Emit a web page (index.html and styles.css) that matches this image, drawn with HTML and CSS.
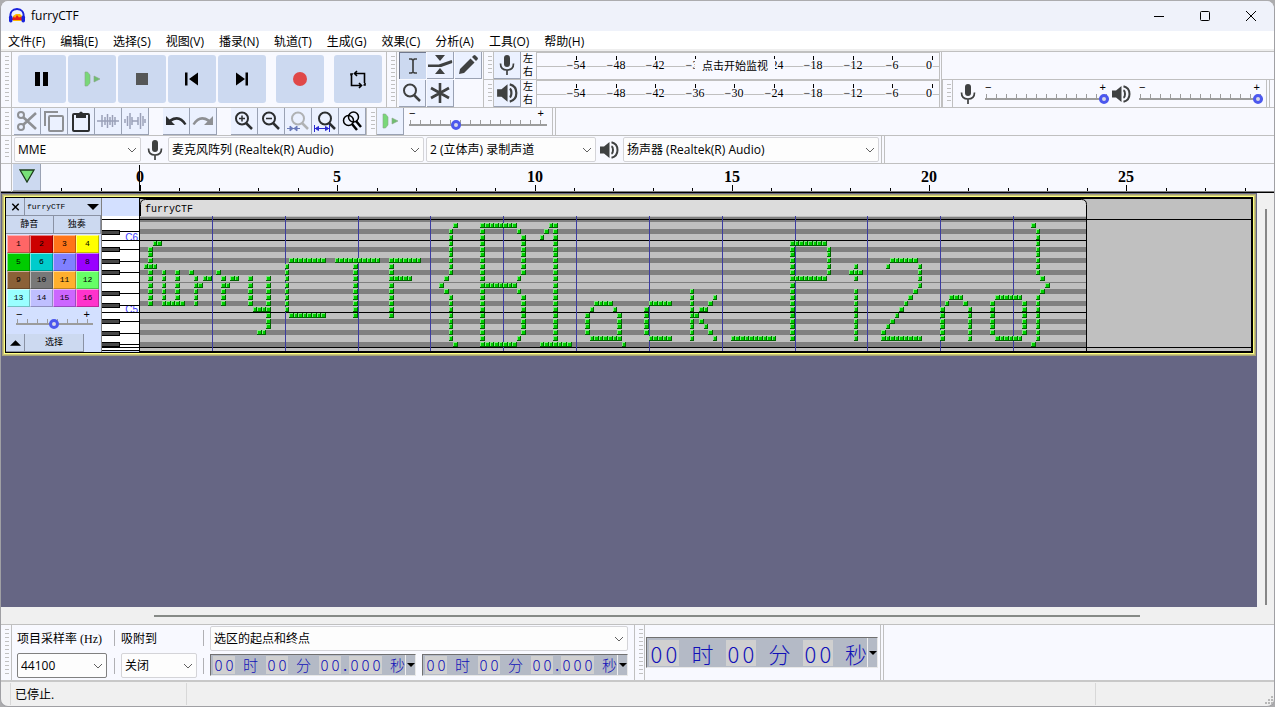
FILE: index.html
```html
<!DOCTYPE html>
<html lang="zh-CN">
<head>
<meta charset="utf-8">
<title>furryCTF</title>
<link rel="stylesheet" href="styles.css">
</head>
<body>
<svg class="defs" aria-hidden="true">
  <symbol id="mic" viewBox="0 0 16 22"><rect x="5" y="1" width="6" height="12" rx="3" fill="#3f4141"/><path d="M1.5 9.500c0 4.500 3 6.500 6.500 6.500s6.500-2 6.500-6.500M8 16v5" fill="none" stroke="#3f4141" stroke-width="1.700"/></symbol>
  <symbol id="speaker" viewBox="0 0 20 20"><path d="M1 6.500h4L10.500 2v16L5 13.500H1z" fill="#3f4141"/><path d="M12.500 6.200c2 1 2 6.600 0 7.600M12.500 2.200c8 2 8 13.600 0 15.600" fill="none" stroke="#3f4141" stroke-width="2"/></symbol>
  <symbol id="lens" viewBox="0 0 22 22"><circle cx="9" cy="8.500" r="6" fill="none" stroke="currentColor" stroke-width="2"/><path d="M13 13l6 6" stroke="currentColor" stroke-width="2.500"/></symbol>
  <symbol id="playspeed" viewBox="0 0 16 16"><path d="M1 1h2.500L6 4v8l-2.500 3H1z" fill="#78d878" stroke="#8aa68a" stroke-width=".6"/><path d="M10 5l6 3-6 3z" fill="#6fbf6f" stroke="#8aa68a" stroke-width=".6"/></symbol>
</svg>
<div class="window">
  <header class="titlebar">
    <svg class="logo" viewBox="0 0 18 18"><path d="M5 14V9l3-2h4l2 2v5z" fill="#ffb900"/><path d="M4 11.500l2-2 1 1.500 2-3 2 2.500 2-1 1 2v1.500H4z" fill="#e8201a"/><path d="M2.500 11C1.500 5 4.500 2 9 2s7.500 3 6.500 9" fill="none" stroke="#1a22dc" stroke-width="1.800"/><rect x="1" y="8.500" width="3.500" height="7" rx="1.700" fill="#1a22dc"/><rect x="13.500" y="8.500" width="3.500" height="7" rx="1.700" fill="#1a22dc"/></svg>
    <h1 class="title">furryCTF</h1>
    <div class="window-buttons">
      <button aria-label="最小化"><svg viewBox="0 0 12 12"><path d="M1 6.500h10"/></svg></button>
      <button aria-label="最大化"><svg viewBox="0 0 12 12"><rect x="1.500" y="1.500" width="9" height="9" rx="1"/></svg></button>
      <button aria-label="关闭"><svg viewBox="0 0 12 12"><path d="M1 1l10 10M11 1L1 11"/></svg></button>
    </div>
  </header>
  <nav class="menu">
    <button>文件(F)</button><button>编辑(E)</button><button>选择(S)</button><button>视图(V)</button><button>播录(N)</button><button>轨道(T)</button><button>生成(G)</button><button>效果(C)</button><button>分析(A)</button><button>工具(O)</button><button>帮助(H)</button>
  </nav>

  <div class="bar bar-main">
    <i class="grab"></i>
    <div class="transport">
      <button aria-label="暂停"><svg viewBox="0 0 24 24"><path d="M5 5h5v14H5zM13 5h5v14h-5z"/></svg></button>
      <button aria-label="播放"><svg viewBox="-4 -4 24 24"><use href="#playspeed" width="16" height="16"/></svg></button>
      <button aria-label="停止"><svg viewBox="0 0 24 24"><path fill="#555757" d="M6 6h12v12H6z"/></svg></button>
      <button aria-label="跳至开始"><svg viewBox="0 0 24 24"><path d="M5 5.500h2.500v13H5zM18 5.500v13L9 12z"/></svg></button>
      <button aria-label="跳至结尾"><svg viewBox="0 0 24 24"><path d="M15.500 5.500H18v13h-2.500zM6 5.500v13L15 12z"/></svg></button>
      <button class="apart" aria-label="录制"><svg viewBox="0 0 24 24"><circle cx="12" cy="12" r="7" fill="#e04848"/></svg></button>
      <button class="apart" aria-label="循环"><svg viewBox="0 0 24 24" fill="none" stroke="#000" stroke-width="1.600"><path d="M9 6.500h9.500V16M15 18.500H5.500V8M11 4L8.500 6.500 11 9M13 16l2.500 2.500L13 21M5 8.500V7h2M19 16v2h-1.500"/></svg></button>
    </div>
    <i class="grab grab-left"></i>
    <div class="tools">
      <button class="tool pressed" aria-label="选择工具"><svg viewBox="0 0 22 22"><path d="M7 4h2.500L11 5l1.500-1H15M11 5v12M7 18h2.500L11 17l1.500 1H15" fill="none" stroke="#3f4141" stroke-width="1.700"/></svg></button>
      <button class="tool" aria-label="包络工具"><svg class="wide" viewBox="0 0 26 22"><path d="M8 1h10l-5 6zM13 14l5 6H8z" fill="#3f4141"/><path d="M1 11.500h11L25 7M1 12h13l11-4" fill="none" stroke="#3f4141" stroke-width="2"/></svg></button>
      <button class="tool" aria-label="绘制工具"><svg viewBox="0 0 22 22"><path d="M2 20l1-5L13.500 4.500l4 4L7 19zM15 3l1.500-1.500q1-1 2 0l2 2q1 1 0 2L19 7z" fill="#3f4141"/></svg></button>
      <button class="tool" aria-label="缩放工具"><svg viewBox="0 0 22 22" color="#3f4141"><use href="#lens"/></svg></button>
      <button class="tool" aria-label="多功能工具"><svg viewBox="0 0 22 22"><path d="M11 1v20M2 6l18 10M20 6L2 16" stroke="#3f4141" stroke-width="2.600"/></svg></button>
    </div>
    <div class="meters">
      <div class="meter-row">
        <i class="grab grab-left"></i>
        <button class="tool" aria-label="录制电平"><svg viewBox="0 0 16 22"><use href="#mic"/></svg></button>
        <div class="channels"><span>左</span><span>右</span></div>
        <div class="meter"><svg class="meter-scale" data-covered="30"></svg><span class="monitor">点击开始监视</span></div>
      </div>
      <div class="meter-row">
        <i class="grab grab-left"></i>
        <button class="tool" aria-label="播放电平"><svg viewBox="0 0 20 20"><use href="#speaker"/></svg></button>
        <div class="channels"><span>左</span><span>右</span></div>
        <div class="meter"><svg class="meter-scale"></svg></div>
      </div>
    </div>
    <div class="mixer-column">
      <div class="mixer-blank"></div>
      <div class="mixer">
        <i class="grab grab-left"></i>
        <svg class="mixer-mic" viewBox="0 0 16 22"><use href="#mic"/></svg>
        <div class="slider"><div class="signs"><span>−</span><span>+</span></div><input type="range" aria-label="录制音量" value="100"></div>
        <svg class="mixer-speaker" viewBox="0 0 20 20"><use href="#speaker"/></svg>
        <div class="slider"><div class="signs"><span>−</span><span>+</span></div><input type="range" aria-label="播放音量" value="100"></div>
        <i class="end"></i>
      </div>
    </div>
  </div>

  <div class="bar bar-edit">
    <i class="grab"></i>
    <div class="tool-group">
      <button class="tool" aria-label="剪切"><svg viewBox="0 0 22 22" fill="none" stroke="#8e9094" stroke-width="2"><circle cx="5" cy="5" r="3"/><circle cx="5" cy="17" r="3"/><path d="M7 7l13 12M7 15L20 3" stroke-width="2.600"/></svg></button>
      <button class="tool" aria-label="复制"><svg viewBox="0 0 22 22" fill="none" stroke="#8e9094" stroke-width="2"><path d="M2 16V2h13"/><rect x="6" y="6" width="14" height="15" rx="1"/></svg></button>
      <button class="tool" aria-label="粘贴"><svg viewBox="0 0 22 22"><rect x="3" y="4" width="16" height="17" rx="1" fill="none" stroke="#2c2e30" stroke-width="2"/><path d="M6 3h3q2-3 4 0h3v5H6z" fill="#2c2e30"/></svg></button>
      <button class="tool" aria-label="修剪"><svg viewBox="0 0 22 22" stroke="#9aa0b8" stroke-width="1.500"><path d="M0 11h22M5 5v12M8 7v8M10.500 4v14M13 7v8M15.500 5v12M18 7v8"/></svg></button>
      <button class="tool" aria-label="静音"><svg viewBox="0 0 22 22" stroke="#9aa0b8" stroke-width="1.500"><path d="M1 9v4M3.500 6v10M6 3v16M8 7v8M8 11h6M14 7v8M16.500 3v16M19 6v10M21 9v4"/></svg></button>
    </div>
    <div class="tool-group">
      <button class="tool" aria-label="撤销"><svg viewBox="0 0 22 22"><path d="M1 6v9h9L6.500 11.500q7-5 13 3.500l2-1Q15 3 4.500 9.500z" fill="#2c2e30"/></svg></button>
      <button class="tool" aria-label="重做"><svg viewBox="0 0 22 22"><path d="M21 6v9h-9l3.500-3.500q-7-5-13 3.500l-2-1Q7 3 17.500 9.500z" fill="#8e9094"/></svg></button>
    </div>
    <div class="tool-group">
      <button class="tool" aria-label="放大"><svg viewBox="0 0 22 22" color="#2c2e30"><use href="#lens"/><path d="M6 8.500h6M9 5.500v6" stroke="#2c2e30" stroke-width="1.500"/></svg></button>
      <button class="tool" aria-label="缩小"><svg viewBox="0 0 22 22" color="#2c2e30"><use href="#lens"/><path d="M6 8.500h6" stroke="#2c2e30" stroke-width="1.500"/></svg></button>
      <button class="tool" aria-label="缩放至选区"><svg viewBox="0 0 22 22" color="#b0b2b4"><use href="#lens" x="2"/><path d="M0 18.500h13M3 16l3 2.500L3 21zM10 16l-3 2.500 3 2.500z" stroke="#6a7ab8" fill="#6a7ab8"/></svg></button>
      <button class="tool" aria-label="适应宽度"><svg viewBox="0 0 22 22" color="#2c2e30"><use href="#lens" x="2"/><path d="M.5 18.500h15M.5 15v7M15.500 15v7M1.500 18.500l3-2v4zM14.500 18.500l-3-2v4z" stroke="#2828d0" fill="#2828d0"/></svg></button>
      <button class="tool" aria-label="缩放切换"><svg viewBox="0 0 22 22" fill="none" stroke="#000" stroke-width="1.500"><circle cx="12.500" cy="7" r="5"/><circle cx="7.500" cy="10.500" r="5"/><path d="M15 11l5 6M11 14l5 6" stroke-width="2.500"/></svg></button>
    </div>
    <i class="grab grab-left"></i>
    <button class="tool" aria-label="按速度播放"><svg viewBox="-3 -3 22 22"><use href="#playspeed" width="16" height="16"/></svg></button>
    <div class="slider slider-speed"><div class="signs"><span>−</span><span>+</span></div><input type="range" aria-label="播放速度" value="33"></div>
    <i class="end"></i>
  </div>

  <div class="bar bar-device">
    <i class="grab"></i>
    <select class="pick pick-host" aria-label="音频主机"><option>MME</option></select>
    <svg class="device-mic" viewBox="0 0 16 22"><use href="#mic"/></svg>
    <select class="pick pick-input" aria-label="录制设备"><option>麦克风阵列 (Realtek(R) Audio)</option></select>
    <select class="pick pick-channels" aria-label="录制声道"><option>2 (立体声) 录制声道</option></select>
    <svg class="device-speaker" viewBox="0 0 20 20"><use href="#speaker"/></svg>
    <select class="pick pick-output" aria-label="播放设备"><option>扬声器 (Realtek(R) Audio)</option></select>
    <i class="end"></i>
  </div>

  <div class="bar bar-ruler">
    <i class="grab grab-plain"></i>
    <button class="tool pin" aria-label="固定播放头"><svg viewBox="0 0 18 14"><path d="M2 1h14L9 13z" fill="#78e078" stroke="#1c3c1c" stroke-width="1.300"/></svg></button>
    <svg class="ruler"></svg>
  </div>

  <main class="workspace">
    <div class="canvas">
      <section class="track">
        <div class="panel">
          <div class="panel-row">
            <button class="pb pb-close" aria-label="关闭轨道"><svg viewBox="0 0 10 10"><path d="M1 1l8 8M9 1L1 9" stroke="#000" stroke-width="1.800"/></svg></button>
            <button class="pb pb-name">furryCTF<svg viewBox="0 0 12 6"><path d="M0 0h12L6 6z"/></svg></button>
          </div>
          <div class="panel-row"><button class="pb pb-wide">静音</button><button class="pb pb-wide">独奏</button></div>
          <div class="midi">
            <button class="c1">1</button><button class="c2">2</button><button class="c3">3</button><button class="c4">4</button>
            <button class="c5">5</button><button class="c6">6</button><button class="c7">7</button><button class="c8">8</button>
            <button class="c9">9</button><button class="c10">10</button><button class="c11">11</button><button class="c12">12</button>
            <button class="c13">13</button><button class="c14">14</button><button class="c15">15</button><button class="c16">16</button>
          </div>
          <div class="slider slider-track"><div class="signs"><span>−</span><span>+</span></div><input type="range" aria-label="力度" value="49"></div>
          <div class="panel-row panel-foot">
            <button class="pb pb-close" aria-label="折叠"><svg viewBox="0 0 12 6"><path d="M0 6h12L6 0z"/></svg></button>
            <button class="pb pb-select">选择</button>
          </div>
        </div>
        <div class="keys"><svg class="piano" viewBox="0 0 37 135"></svg></div>
        <svg class="roll"></svg>
      </section>
    </div>
    <div class="vscroll"><i></i></div>
  </main>
  <div class="hscroll"><i></i></div>

  <div class="bar bar-selection">
    <i class="grab"></i>
    <div class="rate"><label for="rate">项目采样率 (Hz)</label><select id="rate" class="pick pick-rate"><option>44100</option></select></div>
    <div class="ticks"><i></i><i></i></div>
    <div class="snap"><label for="snap">吸附到</label><select id="snap" class="pick"><option>关闭</option></select></div>
    <div class="ticks"><i></i><i></i></div>
    <div class="range">
      <select class="pick" aria-label="选区模式"><option>选区的起点和终点</option></select>
      <div class="times">
        <div class="time"><b>0</b><b>0</b><span>时</span><b>0</b><b>0</b><span>分</span><b>0</b><b>0</b><em>.</em><b>0</b><b>0</b><b>0</b><span class="sec">秒</span><button aria-label="格式"><svg viewBox="0 0 8 4"><path d="M0 0h8L4 4z"/></svg></button></div>
        <div class="time"><b>0</b><b>0</b><span>时</span><b>0</b><b>0</b><span>分</span><b>0</b><b>0</b><em>.</em><b>0</b><b>0</b><b>0</b><span class="sec">秒</span><button aria-label="格式"><svg viewBox="0 0 8 4"><path d="M0 0h8L4 4z"/></svg></button></div>
      </div>
    </div>
    <i class="grab grab-left"></i>
    <div class="time time-large"><b>0</b><b>0</b><span>时</span><b>0</b><b>0</b><span>分</span><b>0</b><b>0</b><span class="sec">秒</span><button aria-label="格式"><svg viewBox="0 0 8 4"><path d="M0 0h8L4 4z"/></svg></button></div>
    <i class="end"></i>
  </div>
  <footer class="status"><span class="status-text">已停止.</span><span class="status-mid"></span><span class="status-grip"><svg viewBox="0 0 10 10" fill="#b8b8b8"><path d="M7 1h2v2H7zM4 4h2v2H4zM7 4h2v2H7zM1 7h2v2H1zM4 7h2v2H4zM7 7h2v2H7z"/></svg></span></footer>
</div>
<script src="script.js"></script>
</body>
</html>
```
FILE: styles.css
```css
* { box-sizing: border-box; }
body {
  margin: 0; height: 100vh; padding-top: 1px; overflow: hidden; background: #acacae;
  font: 12px/16px "Open Sans", "Noto Sans CJK SC", sans-serif; color: #000;
}
button, select, input { font: inherit; color: inherit; margin: 0; padding: 0; border: 0; background: none; }
svg { display: block; }
.defs { position: absolute; width: 0; height: 0; }
.window {
  height: 100%; display: flex; flex-direction: column; overflow: hidden;
  border: solid #a0a0a4; border-width: 0 1px 1px; border-radius: 8px; background: #f0f0f0;
}
.titlebar { flex: none; height: 30px; display: flex; align-items: center; padding-left: 7px; background: #eff2fa; }
.logo { width: 18px; height: 18px; }
.title { margin: 0 auto 0 5px; font: inherit; }
.window-buttons { display: flex; }
.window-buttons button { width: 46px; height: 29px; display: grid; place-items: center; }
.window-buttons svg { width: 12px; height: 12px; fill: none; stroke: #000; stroke-width: 1; }
.menu { flex: none; display: flex; gap: 15px; height: 20px; padding-left: 7px; background: #fff; border-bottom: 2px solid #eee; }
.menu button { white-space: nowrap; line-height: 18px; padding-top: 2px; }

.bar { flex: none; display: flex; align-items: stretch; background: #f8f9ff; border-bottom: 1px solid #c0c0c0; }
.grab {
  flex: none; width: 11px; border-right: 1px solid #c0c0c0;
  background: repeating-linear-gradient(#c0c0c0 0 1px, transparent 1px 4px) 4px 4px / 4px calc(100% - 7px) no-repeat;
}
.grab-left { border-left: 1px solid #c0c0c0; }
.grab-plain { background: none; }
.end { flex: none; width: 4px; border: solid #c0c0c0; border-width: 0 1px; }

.bar-main { height: 57px; border-top: 1px solid #c0c0c0; }
.transport { display: flex; gap: 2px; padding: 3px 4px 0 6px; }
.transport button { width: 48px; height: 48px; border-radius: 3px; background: #ccd9f0; display: grid; place-items: center; }
.transport svg { width: 24px; height: 24px; }
.transport .apart { margin-left: 8px; }
.tool {
  flex: none; width: 27px; height: 27px; display: grid; place-items: center;
  background: #ebf1ff; border: solid #9aa2b4; border-width: 0 1px 1px 0;
}
.tool svg { width: 22px; height: 22px; }
.tool .wide { width: 26px; }
.pressed { background: #ccd9f0; border-width: 1px 0 0 1px; border-color: #70788c; }
.tools { display: grid; grid-template-columns: repeat(3, 27px); gap: 1px; align-content: start; padding: 0 1px 0 2px; }
.meters { display: flex; flex-direction: column; width: 457px; border-right: 1px solid #c0c0c0; }
.meter-row { display: flex; height: 28px; border-bottom: 1px solid #c0c0c0; }
.meter-row:last-child { border: 0; }
.channels { display: flex; flex-direction: column; padding-left: 2px; width: 15px; font-size: 10px; line-height: 13px; }
.meter { position: relative; flex: 1; border-left: 1px solid #c0c0c0; border-top: 1px solid #c0c0c0; }
.meter-scale { width: 100%; height: 26px; }
.meter-scale text { font: 12px "Liberation Serif", serif; text-anchor: middle; stroke: #f8f9ff; stroke-width: 2px; paint-order: stroke; }
.monitor { position: absolute; left: 158px; top: 6px; padding: 0 7px; font-size: 11px; line-height: 13px; background: #f8f9ff; white-space: nowrap; }
.mixer-column { flex: 1; display: flex; flex-direction: column; border-left: 1px solid #c0c0c0; margin-left: 1px; }
.mixer-blank { height: 28px; border-bottom: 1px solid #c0c0c0; }
.mixer { flex: 1; display: flex; align-items: center; }
.mixer > .grab, .mixer > .end { align-self: stretch; }
.mixer-mic { width: 16px; height: 22px; margin: 0 9px 0 7px; }
.mixer-speaker { width: 20px; height: 20px; margin: 0 8px 0 2px; }
.mixer .end { margin-left: 3px; }

.slider { width: 124px; }
.signs { display: flex; justify-content: space-between; height: 9px; padding: 0 3px 0 0; font: 11px/9px "Liberation Sans", sans-serif; }
.slider input {
  appearance: none; display: block; width: 100%; height: 12px;
  background:
    linear-gradient(#9c9c9c, #9c9c9c) 0 6px / 100% 2px no-repeat,
    repeating-linear-gradient(90deg, #9c9c9c 0 1px, transparent 1px 10px) 1px 2px / 100% 4px no-repeat;
}
.slider input::-webkit-slider-thumb {
  appearance: none; width: 10px; height: 10px; margin-top: 1px; border: 3px solid #4c58ee; border-radius: 50%; background: #d8d8e8;
}
.bar-edit { height: 28px; }
.tool-group { display: flex; padding-left: 2px; margin-right: 12px; }
.bar-edit .grab-left { margin-left: -12px; }
.slider-speed { width: 138px; margin: 1px 5px 0 5px; }

.bar-device { height: 28px; align-items: center; }
.bar-device > .grab, .bar-device > .end { align-self: stretch; }
.pick {
  appearance: none; height: 25px; padding: 0 20px 0 3px; border: 1px solid #d4d4d8; border-radius: 2px;
  background: #fdfdfd url("data:image/svg+xml,%3Csvg xmlns='http://www.w3.org/2000/svg' width='10' height='6'%3E%3Cpath d='M1 1l4 4 4-4' fill='none' stroke='%23606060'/%3E%3C/svg%3E") right 3px center no-repeat;
}
.pick-host { width: 127px; margin-left: 2px; }
.device-mic { width: 16px; height: 22px; margin: 0 5px 0 6px; }
.pick-input { width: 256px; margin-right: 2px; }
.pick-channels { width: 170px; }
.device-speaker { width: 20px; height: 20px; margin: 0 4px 0 3px; }
.pick-output { width: 256px; margin-right: 2px; }

.bar-ruler { height: 29px; border-bottom: 1px solid #000; box-shadow: inset 0 -1px #808080; }
.pin { width: 28px; background: #ccd9f0; margin-left: 1px; margin-right: -1px; }
.pin svg { width: 18px; height: 14px; margin-bottom: 2px; }
.ruler { flex: 1; min-width: 0; height: 28px; }
.ruler text { font: bold 16px "Liberation Serif", serif; text-anchor: middle; }

.workspace { flex: 1; min-height: 0; display: flex; }
.canvas { flex: 1; min-width: 0; background: #666684; padding: 2px 2px 0; }
.track {
  display: flex; height: 160px; background: #c0c0c0; border: 1px solid #c8c47c;
  box-shadow: 0 0 0 1px #a8a474, inset 0 0 0 1px #ffff80, inset 0 0 0 3px #000; padding: 2px;
}
.panel { flex: none; width: 96px; background: #d3e0ff; border-right: 1px solid #808080; display: flex; flex-direction: column; }
.panel-row { display: flex; height: 18px; }
.pb {
  background: #ccd9f0; border: solid #8a92a4; border-width: 0 1px 1px 0; font: 9px/16px "Liberation Mono", "Noto Sans CJK SC", monospace;
  display: flex; align-items: center; justify-content: center;
}
.pb-close { width: 19px; }
.pb-close svg { width: 11px; height: 8px; }
.pb-name { flex: 1; justify-content: space-between; padding: 0 2px; font-size: 8px; border-right: 0; }
.pb-name svg { width: 12px; height: 6px; }
.pb-wide { flex: 1; }
.midi { display: grid; grid-template-columns: repeat(4, 23px); grid-auto-rows: 18px; padding: 1px 1px 0; }
.midi button { font: 8px/16px "Liberation Mono", monospace; border: 1px solid; border-color: #ffffff80 #00000040 #00000040 #ffffff80; }
.c1 { background: #ff6666; } .c2 { background: #cc0000; } .c3 { background: #ff7519; } .c4 { background: #ffff00; }
.c5 { background: #00cc00; } .c6 { background: #00cccc; } .c7 { background: #8080ff; } .c8 { background: #9900ff; }
.c9 { background: #8b6137; } .c10 { background: #787878; } .c11 { background: #ffaf2d; } .c12 { background: #66ff66; }
.c13 { background: #99ffff; } .c14 { background: #bfbfff; } .c15 { background: #cc66ff; } .c16 { background: #ff33cc; }
.slider-track { width: 77px; margin: 2px 0 0 10px; }
.slider-track .signs { height: 8px; line-height: 10px; }
.panel-foot { margin-top: auto; }
.pb-select { width: 59px; }
.keys { flex: none; width: 38px; padding-top: 18px; background: #d3e0ff; border-right: 1px solid #000; }
.piano { width: 37px; height: 135px; }
.piano text { font: 10px "Liberation Sans", sans-serif; fill: #3c3cff; text-anchor: end; }
.roll { flex: 1; min-width: 0; height: 153px; }
.roll text { font: 10px "Liberation Mono", monospace; }
.vscroll { flex: none; width: 17px; padding: 16px 0 2px 8px; background: #f0f0f0; }
.vscroll i { display: block; width: 2px; height: 100%; background: #868686; }
.hscroll { flex: none; height: 17px; padding: 8px 134px 0 153px; }
.hscroll i { display: block; height: 2px; background: #868a86; }

.bar-selection { height: 58px; border-top: 1px solid #c0c0c0; border-bottom: 2px solid #c8c8c8; }
.bar-selection label { height: 27px; line-height: 27px; white-space: nowrap; font-family: "Liberation Serif", "Noto Sans CJK SC", serif; }
.rate, .snap { display: flex; flex-direction: column; padding-top: 1px; }
.rate { width: 96px; padding-left: 5px; }
.pick-rate { width: 90px; border-color: #808080; }
.snap { width: 76px; margin-left: 6px; }
.ticks { width: 1px; margin-left: 6px; display: flex; flex-direction: column; gap: 12px; padding-top: 5px; }
.ticks i { height: 16px; background: #b0b0b4; }
.range { display: flex; flex-direction: column; gap: 3px; width: 418px; margin: 1px 6px 0 6px; }
.times { display: flex; justify-content: space-between; }
.time {
  display: flex; align-items: center; height: 22px; padding-left: 2px; background: #b4bac6; color: #1010b8;
  border: solid; border-width: 1px; border-color: #707070 #e8e8e8 #e8e8e8 #707070; font: 15px/20px "Noto Sans CJK SC", sans-serif;
}
.time b { width: 11px; height: 18px; line-height: 18px; text-align: center; font-weight: 300; background: #d0d0d0; }
.time span { width: 31px; text-align: center; font-weight: 300; }
.time em { width: 8px; font-style: normal; text-align: center; }
.time .sec { width: 23px; text-align: right; }
.time button { width: 10px; height: 100%; display: grid; place-items: center; border-left: 1px solid #f0f0f0; }
.time button svg { width: 8px; height: 4px; }
.time-large { align-self: center; height: 31px; margin: 0 2px 0 1px; font-size: 22px; }
.time-large b { width: 15px; height: 26px; line-height: 26px; }
.time-large span { width: 47px; }
.time-large .sec { width: 34px; }
.status { flex: none; height: 24px; display: flex; padding: 1px 0 1px 9px; line-height: 23px; }
.status span { border-left: 1px solid #d8d8d8; }
.status-text { width: 176px; padding-left: 4px; }
.status-mid { flex: 1; }
.status-grip { width: 179px; display: flex; justify-content: flex-end; align-items: flex-end; }
.status-grip svg { width: 10px; height: 10px; }
```
FILE: script.js
```js
const NS = "http://www.w3.org/2000/svg";

function add(parent, name, attrs, text) {
  const el = document.createElementNS(NS, name);
  for (const key in attrs) el.setAttribute(key, attrs[key]);
  if (text !== undefined) el.textContent = text;
  parent.appendChild(el);
}
function rect(parent, x, y, width, height, fill) {
  add(parent, "rect", { x, y, width, height, fill });
}

// Level meters, -54 dB to 0 dB in steps of 6
document.querySelectorAll(".meter-scale").forEach((svg) => {
  rect(svg, 0, 13, "100%", 1, "#c0c0c0");
  for (let i = 0; i < 10; i++) {
    const x = Math.round(39 + i * 39.5);
    const db = 54 - i * 6;
    if (String(db) === svg.dataset.covered) continue;
    rect(svg, x, 3, 1, 4, "#000");
    add(svg, "text", { x: db ? x : x - 3, y: 16 }, db ? "−" + db : "0");
  }
});

// Time ruler
const SECOND = 39.45;
const ruler = document.querySelector(".ruler");
for (let s = -2; s <= 28; s++) {
  const x = Math.round(100 + s * SECOND);
  const major = s % 5 === 0;
  rect(ruler, x, major ? 21 : 24, 1, major ? 6 : 3, "#000");
  if (major && s >= 0) add(ruler, "text", { x: x, y: 18 }, s);
}
rect(ruler, 99, 1, 1, 26, "#000");

// Piano keys
const piano = document.querySelector(".piano");
rect(piano, 0, 0, 37, 135, "#fff");
[["C6", 25], ["C5", 97]].forEach(([name, y]) => add(piano, "text", { x: 36, y }, name));
[3, 15, 24, 33, 45, 56, 66, 77, 89, 96, 105, 117, 128, 131, 134].forEach((y) => rect(piano, 0, y, 37, 1, "#000"));
[14, 31, 43, 54, 75, 87, 103, 115, 126].forEach((y) => {
  rect(piano, 0, y, 18, 5, "#000");
  rect(piano, 0, y + 1, 17, 3, "#484848");
});

// Note clip
const roll = document.querySelector(".roll");
const CLIP = 947;
[[19, 5], [31, 5], [49, 5], [60, 5], [72, 5], [84, 1], [91, 5], [103, 5], [121, 5], [132, 5], [144, 5]]
  .forEach(([y, h]) => rect(roll, 0, y, CLIP, h, "#808080"));
rect(roll, 0, 42, CLIP, 1, "#000");
rect(roll, 0, 114, CLIP, 1, "#000");
rect(roll, 0, 21, "100%", 1, "#000");
rect(roll, 0, 149, "100%", 1, "#000");
add(roll, "path", { d: "M.5 18V6.500q0-5 5-5h936q5 0 5 5V18z", fill: "#dcdcdc" });
add(roll, "path", { d: "M.5 18V6.500q0-5 5-5h936q5 0 5 5V153", fill: "none", stroke: "#000" });
add(roll, "text", { x: 5, y: 14 }, "furryCTF");

const STEP = 4.553;
const column = (c) => Math.floor(c * STEP - 0.5);
for (let bar = 1; bar < 13; bar++) rect(roll, column(bar * 16), 18, 1, 135, "#3c3ca0");

const ROW_Y = [25, 31, 37, 43, 49, 54, 60, 66, 72, 78, 85, 91, 97, 103, 109, 115, 121, 126, 132, 138, 144];
// Each entry: first column, last column, first row, last row
const NOTES = [
  [3, 4, 3, 3], [2, 2, 4, 6], [1, 3, 7, 7], [2, 2, 8, 13],
  [5, 5, 8, 12], [8, 8, 8, 12], [5, 9, 13, 13],
  [11, 11, 8, 8], [12, 12, 9, 13], [14, 15, 9, 9], [13, 13, 10, 10],
  [17, 17, 8, 8], [18, 18, 9, 13], [20, 21, 9, 9], [19, 19, 10, 10],
  [24, 24, 9, 13], [28, 28, 9, 17], [25, 27, 14, 14], [26, 27, 18, 18],
  [33, 40, 6, 6], [32, 32, 7, 14], [33, 40, 15, 15],
  [43, 52, 6, 6], [47, 47, 7, 15],
  [55, 61, 6, 6], [55, 55, 7, 15], [56, 59, 9, 9],
  [69, 69, 0, 0], [68, 68, 1, 8], [67, 67, 9, 9], [66, 66, 10, 10], [67, 67, 11, 11], [68, 68, 12, 19], [69, 69, 20, 20],
  [75, 75, 0, 20], [76, 82, 0, 0], [83, 83, 1, 1], [84, 84, 2, 8], [83, 83, 9, 9], [76, 82, 10, 10], [83, 83, 11, 11],
  [84, 84, 12, 18], [83, 83, 19, 19], [76, 82, 20, 20],
  [90, 90, 0, 0], [91, 91, 0, 19], [89, 89, 1, 1], [88, 88, 2, 2], [88, 94, 20, 20],
  [100, 103, 13, 13], [99, 99, 14, 14], [104, 104, 14, 14], [98, 98, 15, 18], [105, 105, 15, 18], [99, 105, 19, 19], [106, 106, 20, 20],
  [112, 116, 13, 13], [111, 111, 14, 18], [112, 116, 19, 19],
  [121, 121, 11, 19], [126, 126, 12, 12], [125, 125, 13, 13], [123, 124, 14, 14], [122, 122, 15, 15], [123, 123, 16, 16],
  [124, 124, 17, 17], [125, 125, 18, 18], [126, 126, 19, 19],
  [130, 139, 19, 19],
  [143, 143, 3, 19], [144, 150, 3, 3], [151, 151, 4, 8], [144, 150, 9, 9],
  [157, 157, 7, 9], [156, 156, 8, 8], [158, 158, 8, 8], [157, 157, 11, 19],
  [165, 170, 6, 6], [164, 164, 7, 7], [171, 171, 7, 10], [170, 170, 11, 11], [169, 169, 12, 12], [168, 168, 13, 13],
  [167, 167, 14, 14], [166, 166, 15, 15], [165, 165, 16, 16], [164, 164, 17, 17], [163, 163, 18, 18], [163, 171, 19, 19],
  [178, 180, 12, 12], [177, 177, 13, 13], [181, 181, 13, 13], [176, 176, 14, 19], [182, 182, 14, 19],
  [188, 193, 12, 12], [187, 187, 13, 18], [194, 194, 13, 18], [188, 193, 19, 19],
  [196, 196, 0, 0], [197, 197, 1, 8], [198, 198, 9, 9], [199, 199, 10, 10], [198, 198, 11, 11], [197, 197, 12, 19], [196, 196, 20, 20]
];
NOTES.forEach(([c1, c2, r1, r2]) => {
  for (let c = c1; c <= c2; c++) {
    for (let r = r1; r <= r2; r++) {
      const x = column(c), y = ROW_Y[r], w = column(c + 1) - x;
      rect(roll, x, y, w, 5, "#006400");
      rect(roll, x, y, w - 1, 4, "#7ee67e");
      rect(roll, x + 1, y + 1, w - 2, 3, "#00d000");
    }
  }
});
```
